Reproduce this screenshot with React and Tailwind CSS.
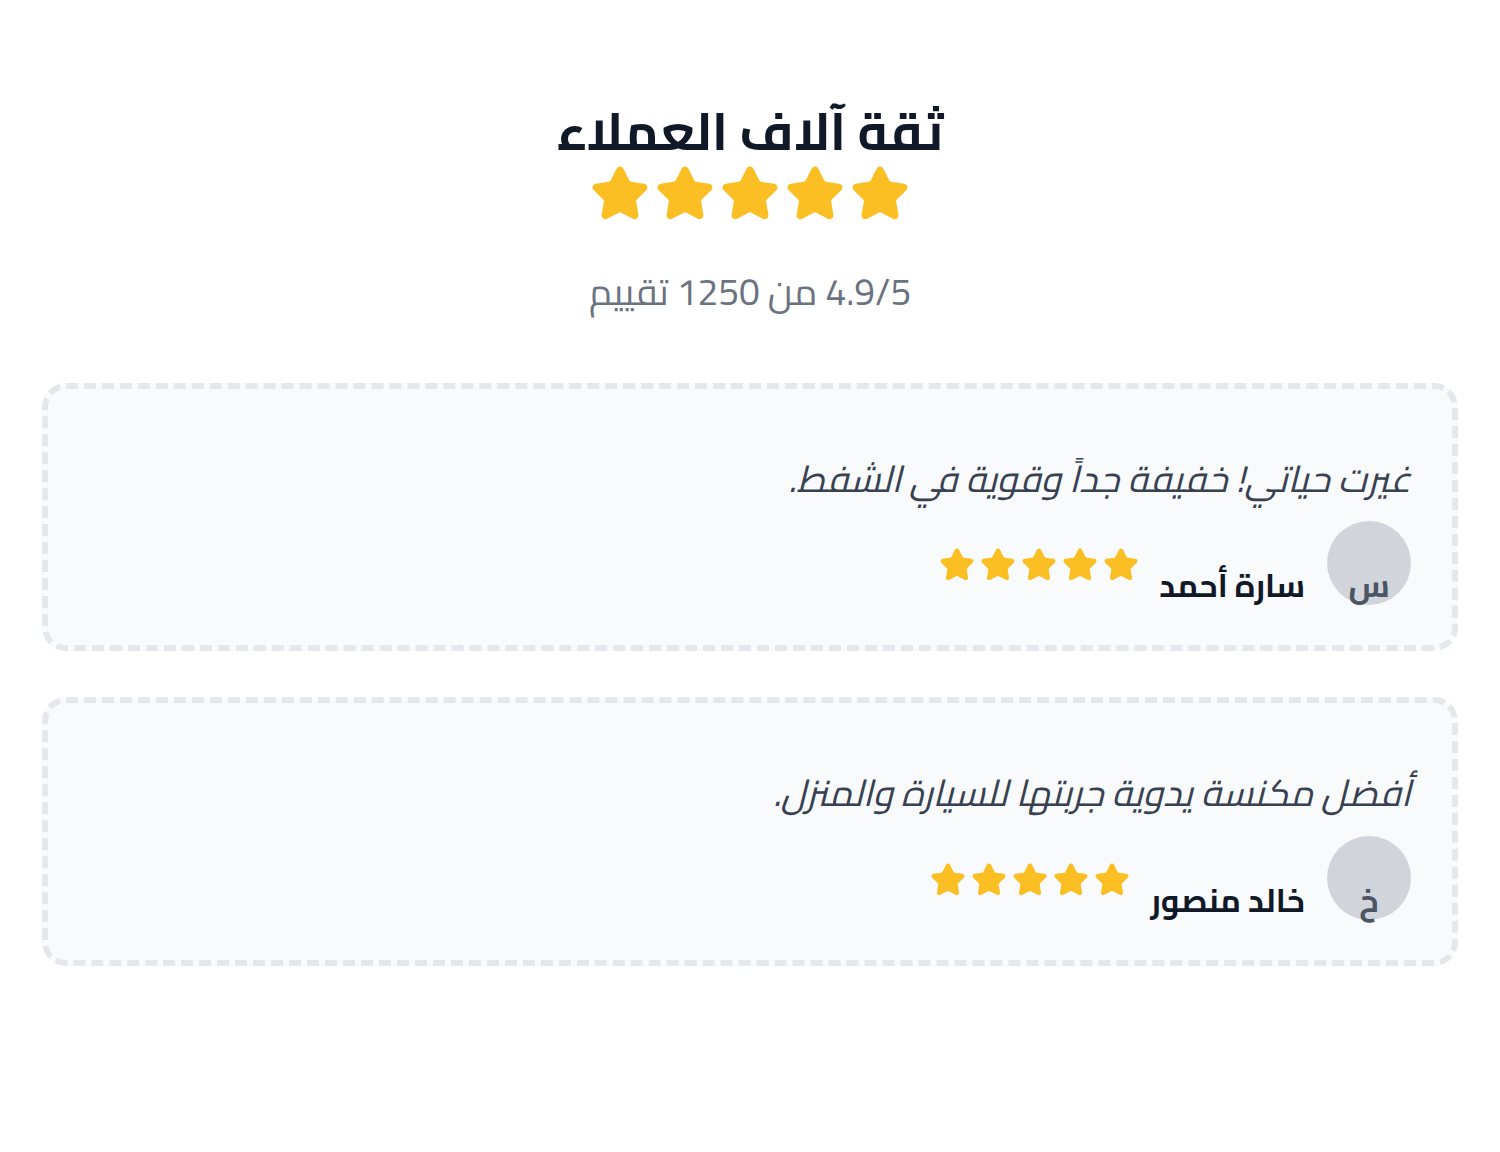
import { Star } from 'lucide-react';

const reviews = [
    { initial: 'س', name: 'سارة أحمد', text: 'غيرت حياتي! خفيفة جداً وقوية في الشفط.' },
    { initial: 'خ', name: 'خالد منصور', text: 'أفضل مكنسة يدوية جربتها للسيارة والمنزل.' },
];

const Stars = ({ size }) => (
    <div className="flex gap-[5px]">
        {[0, 1, 2, 3, 4].map((i) => (
            <Star key={i} size={size} className="text-[#fbbf24] fill-[#fbbf24]" strokeWidth={2} />
        ))}
    </div>
);

const App = () => {
    return (
        <div dir="rtl" className="min-h-screen bg-white font-['Cairo',sans-serif] px-[42px] pt-[105px]">
            <div className="flex flex-col items-center">
                <h2 className="text-[52px] leading-none font-bold text-[#111827]">ثقة آلاف العملاء</h2>
                <div className="mt-[7px]">
                    <Stars size={60} />
                </div>
                <p className="mt-[40px] text-[37px] text-[#6b7280]">4.9/5 من 1250 تقييم</p>
            </div>

            <div className="mt-[63px] flex flex-col gap-[46px]">
                {reviews.map((r) => (
                    <div key={r.name} className="bg-[#f9fafb] border-[6px] border-dashed border-[#e5e7eb] rounded-3xl px-[41px] pt-[62px] pb-[40px]">
                        <p className="text-[37px] italic text-[#374151]">{r.text}</p>
                        <div className="mt-[15px] flex items-end gap-[22px]">
                            <div className="w-[84px] h-[84px] rounded-full bg-[#d1d5db] flex items-end justify-center text-[32px] leading-none font-bold text-[#4b5563]">
                                <span className="mb-[4px]">{r.initial}</span>
                            </div>
                            <div className="flex items-end gap-5">
                                <span className="mb-[4px] text-[32px] leading-none font-bold text-[#111827]">{r.name}</span>
                                <div className="mb-[22px]">
                                    <Stars size={36} />
                                </div>
                            </div>
                        </div>
                    </div>
                ))}
            </div>
        </div>
    );
};

export default App;
